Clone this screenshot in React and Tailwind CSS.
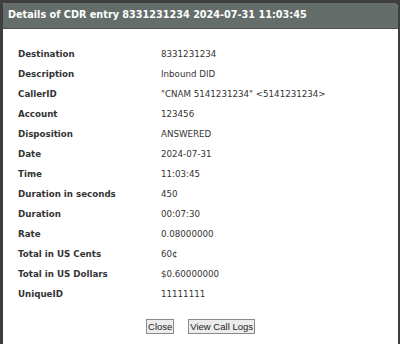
const rows = [
  ["Destination", "8331231234"],
  ["Description", "Inbound DID"],
  ["CallerID", "\"CNAM 5141231234\" <5141231234>"],
  ["Account", "123456"],
  ["Disposition", "ANSWERED"],
  ["Date", "2024-07-31"],
  ["Time", "11:03:45"],
  ["Duration in seconds", "450"],
  ["Duration", "00:07:30"],
  ["Rate", "0.08000000"],
  ["Total in US Cents", "60¢"],
  ["Total in US Dollars", "$0.60000000"],
  ["UniqueID", "11111111"],
];

export default function App() {
  return (
    <div className="w-[400px] h-[344px] bg-[#3c3f3e] overflow-hidden pl-[3px] pt-[3px] pr-[2px] font-['DejaVu_Sans',Verdana,sans-serif]">
      <div className="h-full bg-white rounded-tr-[5px] rounded-tl-[2px] overflow-hidden flex flex-col">
        <div className="h-[26px] bg-[#646d6a] flex items-center pl-[5px] border-b border-[#4d5552]">
          <span className="text-white font-bold text-[9.7px]">
            Details of CDR entry 8331231234 2024-07-31 11:03:45
          </span>
        </div>
        <div className="pt-[16px] pl-[15px] flex flex-col">
          {rows.map(([label, value]) => (
            <div key={label} className="h-[20px] flex items-center text-[8.7px] text-[#333]">
              <span className="w-[143px] font-bold">{label}</span>
              <span>{value}</span>
            </div>
          ))}
        </div>
        <div className="flex justify-center gap-[14px] mt-[14px] font-['Liberation_Sans',Arial,sans-serif]">
          <button className="h-[15px] px-[1px] text-[9.5px] text-[#222] bg-[#ececec] border border-[#8a8a8a] leading-none">
            Close
          </button>
          <button className="h-[15px] px-[1px] text-[9.5px] text-[#222] bg-[#ececec] border border-[#8a8a8a] leading-none">
            View Call Logs
          </button>
        </div>
      </div>
    </div>
  );
}
